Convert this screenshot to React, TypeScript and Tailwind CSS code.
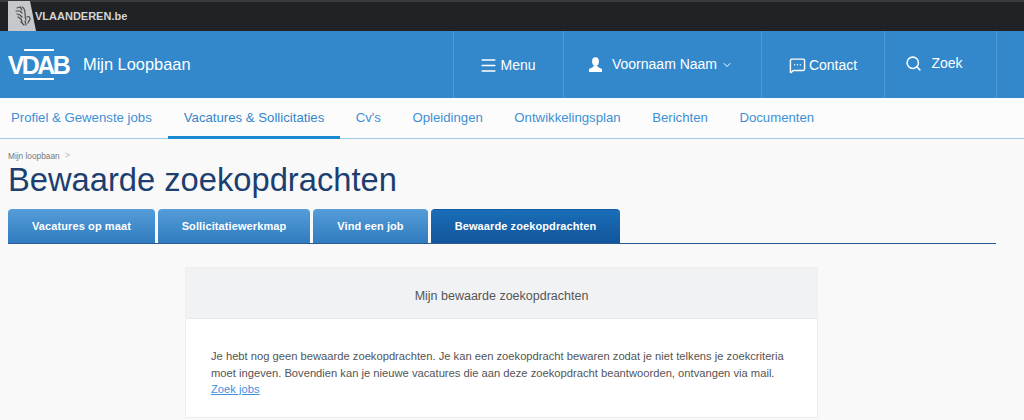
import React from "react";
import { Menu, Search, ChevronDown, MessageSquareMore } from "lucide-react";

const navItems = [
  "Profiel & Gewenste jobs",
  "Vacatures & Sollicitaties",
  "Cv's",
  "Opleidingen",
  "Ontwikkelingsplan",
  "Berichten",
  "Documenten",
];

const tabs = [
  { label: "Vacatures op maat", width: "w-[147px]" },
  { label: "Sollicitatiewerkmap", width: "w-[152px]" },
  { label: "Vind een job", width: "w-[115px]" },
  { label: "Bewaarde zoekopdrachten", width: "w-[189px]", active: true },
];

const FlandersBadge = () => (
  <svg width="29" height="31" viewBox="0 0 29 31" className="block shrink-0">
    <path d="M0 1H22L28 31H0Z" fill="#c6c8cb" />
    <g fill="none" stroke="#4a4c50" strokeWidth="1.200" strokeLinecap="round">
      <path d="M9 8l3-1 2 3M8 11l4 0 2 2M9 14l3 1 2 2M10 17l3 2 1 3" />
      <path d="M14 7c2 1 3 3 3 6s0 5 1 7M13 22l3 3M17 21l1 4" />
      <path d="M19 17c2-1 3 0 3 2s-2 2-2 4" />
    </g>
  </svg>
);

const UserIcon = () => (
  <svg width="15" height="15" viewBox="0 0 15 15" fill="#fff" className="block">
    <ellipse cx="7.5" cy="4.5" rx="3.4" ry="4.2" />
    <path d="M5.6 8.500h3.800l.5 1.600 4.100 2V15H1v-2.900l4.100-2z" />
  </svg>
);

const Logo = () => (
  <div className="flex h-[31px] w-[61px] flex-col items-center justify-between">
    <div className="h-[2px] w-[30px] bg-white" />
    <span className="-ml-[1px] text-[25px] leading-[24px] font-bold tracking-[-2.600px] text-white">
      VDAB
    </span>
    <div className="h-[2px] w-[30px] bg-white" />
  </div>
);

const HeaderCell = ({
  width,
  className = "",
  children,
}: {
  width: string;
  className?: string;
  children: React.ReactNode;
}) => (
  <div
    className={`flex h-full items-center justify-center border-l border-[#4f98d3] text-[14px] text-white ${width} ${className}`}
  >
    {children}
  </div>
);

const App = () => {
  return (
    <div className="h-[420px] w-[1024px] overflow-hidden bg-[#f9f9f9] font-['Liberation_Sans',Arial,sans-serif]">
      <div className="flex h-[31px] items-start border-t-2 border-[#3a3a3c] bg-[#202226] pl-2">
        <div className="-mt-[2px]">
          <FlandersBadge />
        </div>
        <span className="-ml-[2px] text-[11px] leading-[29px] font-bold text-[#d4d5d7]">
          VLAANDEREN.be
        </span>
      </div>

      <header className="flex h-[67px] items-center bg-[#3388cc] pl-2">
        <Logo />
        <span className="ml-[14px] text-[16.400px] text-white">Mijn Loopbaan</span>
        <div className="ml-auto flex h-full pr-[27px]">
          <HeaderCell width="w-[110px]" className="pt-[2px] pr-[2px]">
            <Menu size={19} strokeWidth={1.900} className="mr-[2px]" />
            Menu
          </HeaderCell>
          <HeaderCell width="w-[198px]" className="pr-[4px]">
            <UserIcon />
            <span className="ml-[9px]">Voornaam Naam</span>
            <ChevronDown size={12} strokeWidth={2} className="ml-[4px]" />
          </HeaderCell>
          <HeaderCell width="w-[123px]" className="pt-[2px]">
            <MessageSquareMore size={17} strokeWidth={2} className="mr-[3px]" />
            Contact
          </HeaderCell>
          <HeaderCell width="w-[113px]" className="border-r pr-[13px] pb-[2px]">
            <Search size={17} strokeWidth={2.200} className="mr-[9px]" />
            Zoek
          </HeaderCell>
        </div>
      </header>

      <nav className="h-[41px] border-b border-[#9fc9e8] bg-[#fcfcfc]">
        <ul className="flex h-full">
          {navItems.map((item, i) => (
            <li
              key={item}
              className={`flex h-[41px] items-center text-[13.200px] ${
                i === 0 ? "pr-[16.250px] pl-[11px]" : "px-[15.750px]"
              } ${
                i === 1
                  ? "border-b-[3px] border-[#1a8ad0] pt-[2px] text-[#3385c9]"
                  : "pb-[1px] text-[#3f8fd6]"
              }`}
            >
              {item}
            </li>
          ))}
        </ul>
      </nav>

      <main className="px-2">
        <div className="mt-[12px] flex h-[10px] items-center text-[8.300px] text-[#777]">
          Mijn loopbaan
          <span className="ml-[5px] text-[9px] text-[#bbb]">&gt;</span>
        </div>
        <h1 className="mt-[1px] text-[32.700px] leading-[36px] text-[#1c3f70]">
          Bewaarde zoekopdrachten
        </h1>

        <div className="mt-[11px] mr-[20px] flex h-[35px] gap-[3px] border-b border-[#2c5a90]">
          {tabs.map((tab) => (
            <div
              key={tab.label}
              className={`flex h-[34px] items-center justify-center rounded-t-[4px] border-t text-[11px] font-bold tracking-[0.100px] text-white ${tab.width} ${
                tab.active
                  ? "border-[#0f5ba3] bg-gradient-to-b from-[#1a6db8] to-[#12569b]"
                  : "border-[#5b9fd8] bg-gradient-to-b from-[#549cd8] to-[#2f7cbf]"
              }`}
            >
              {tab.label}
            </div>
          ))}
        </div>

        <section className="mt-[23px] ml-[177px] h-[151px] w-[633px] border border-[#eeeeee] bg-white">
          <div className="flex h-[51px] items-center justify-center border-b border-[#e8e8e8] bg-[#f1f2f4] pt-[6px] text-[12.500px] text-[#555]">
            Mijn bewaarde zoekopdrachten
          </div>
          <div className="px-[25px] pt-[29px] text-[11.200px] leading-[16.500px] text-[#555]">
            <p>
              Je hebt nog geen bewaarde zoekopdrachten. Je kan een zoekopdracht bewaren zodat je niet
              telkens je zoekcriteria moet ingeven. Bovendien kan je nieuwe vacatures die aan deze
              zoekopdracht beantwoorden, ontvangen via mail.
            </p>
            <a className="text-[#4090e0] underline">Zoek jobs</a>
          </div>
        </section>
      </main>
    </div>
  );
};

export default App;
